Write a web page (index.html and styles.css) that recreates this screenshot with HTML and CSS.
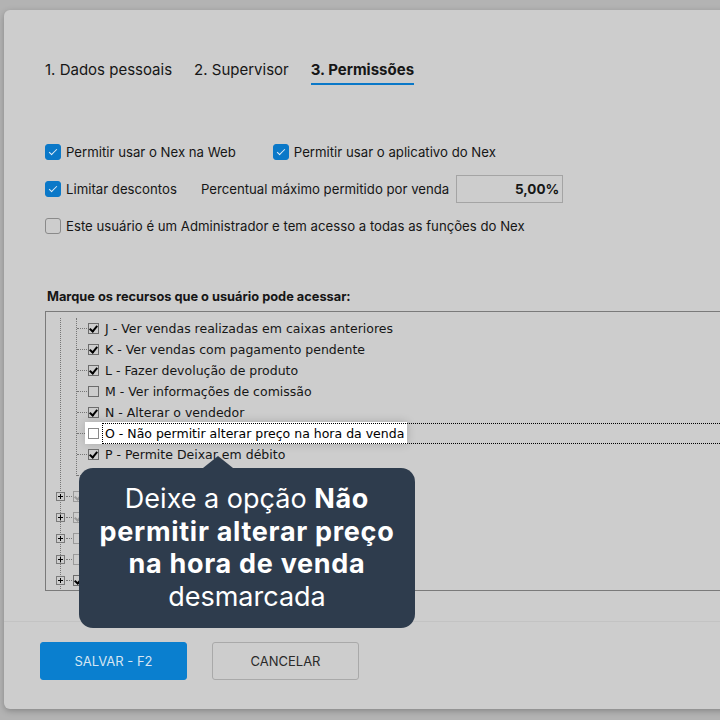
FILE: index.html
```html
<!DOCTYPE html>
<html lang="pt-BR">
<head>
  <meta charset="UTF-8" />
  <meta name="viewport" content="width=device-width, initial-scale=1.0" />
  <title>Permissões do usuário</title>
  <link rel="stylesheet" href="styles.css">
</head>
<body>
  <div class="dialog">
    <nav class="tabs">
      <span class="tab">1. Dados pessoais</span>
      <span class="tab">2. Supervisor</span>
      <span class="tab active">3. Permissões</span>
    </nav>

    <div class="options">
      <div class="opt-row">
        <label class="check"><span class="box on"></span>Permitir usar o Nex na Web</label>
        <label class="check app"><span class="box on"></span>Permitir usar o aplicativo do Nex</label>
      </div>
      <div class="opt-row">
        <label class="check"><span class="box on"></span>Limitar descontos</label>
        <span class="pct-label">Percentual máximo permitido por venda</span>
        <span class="pct-input">5,00%</span>
      </div>
      <div class="opt-row">
        <label class="check"><span class="box"></span>Este usuário é um Administrador e tem acesso a todas as funções do Nex</label>
      </div>
    </div>

    <div class="res-title">Marque os recursos que o usuário pode acessar:</div>
    <div class="tree">
      <div class="branch outer">
        <div class="branch inner">
          <div class="leaf"><span class="hl"></span><span class="cb on"></span><span class="txt">J - Ver vendas realizadas em caixas anteriores</span></div>
          <div class="leaf"><span class="hl"></span><span class="cb on"></span><span class="txt">K - Ver vendas com pagamento pendente</span></div>
          <div class="leaf"><span class="hl"></span><span class="cb on"></span><span class="txt">L - Fazer devolução de produto</span></div>
          <div class="leaf"><span class="hl"></span><span class="cb"></span><span class="txt">M - Ver informações de comissão</span></div>
          <div class="leaf"><span class="hl"></span><span class="cb on"></span><span class="txt">N - Alterar o vendedor</span></div>
          <div class="leaf spot"><span class="hl"></span><span class="cb"></span><span class="txt focus">O - Não permitir alterar preço na hora da venda</span></div>
          <div class="leaf"><span class="hl"></span><span class="cb on"></span><span class="txt">P - Permite Deixar em débito</span></div>
          <div class="leaf"><span class="hl"></span><span class="cb on"></span><span class="txt"></span></div>
        </div>
        <div class="node"><span class="plus"></span><span class="hl short"></span><span class="cb on off"></span></div>
        <div class="node"><span class="plus"></span><span class="hl short"></span><span class="cb on off"></span></div>
        <div class="node"><span class="plus"></span><span class="hl short"></span><span class="cb off"></span></div>
        <div class="node"><span class="plus"></span><span class="hl short"></span><span class="cb off"></span></div>
        <div class="node"><span class="plus"></span><span class="hl short"></span><span class="cb on"></span></div>
      </div>
    </div>

    <div class="footer">
      <button class="btn primary">SALVAR - F2</button>
      <button class="btn">CANCELAR</button>
    </div>

    <div class="tip">
      Deixe a opção <b>Não permitir alterar preço na hora de venda</b> desmarcada
    </div>
  </div>
</body>
</html>
```

FILE: styles.css
```css
body {
  margin: 0;
  height: 720px;
  overflow: hidden;
  background: #b3b3b3;
  font-family: Inter, "Noto Sans", sans-serif;
  color: #161616;
}
.dialog {
  position: relative;
  box-sizing: border-box;
  width: 760px;
  height: 699px;
  margin: 10px 0 0 4px;
  background: #cdcdcd;
  border-radius: 6px 0 0 6px;
  box-shadow: 0 2px 6px rgba(0, 0, 0, 0.25);
}

/* tabs */
.tabs {
  display: flex;
  gap: 22px;
  padding: 50px 0 0 41px;
}
.tab {
  font-size: 15px;
  line-height: 20px;
  padding-bottom: 3px;
  border-bottom: 2px solid transparent;
}
.tab.active {
  font-weight: 700;
  border-bottom-color: #0a78c8;
}

/* options */
.options {
  display: flex;
  flex-direction: column;
  gap: 9px;
  margin: 53px 0 0 41px;
}
.opt-row {
  display: flex;
  align-items: center;
  height: 28px;
  font-size: 13.2px;
}
.check {
  display: flex;
  align-items: center;
  gap: 5px;
}
.check.app {
  margin-left: 37px;
}
.box {
  position: relative;
  box-sizing: border-box;
  width: 16px;
  height: 16px;
  border: 1px solid #8a8a8a;
  border-radius: 3px;
}
.box.on {
  background: #0a78c8;
  border-color: #0a78c8;
}
.box.on::after {
  content: "";
  position: absolute;
  left: 5px;
  top: 2px;
  width: 3px;
  height: 7px;
  border: solid #e4eef7;
  border-width: 0 1.5px 1.5px 0;
  transform: rotate(45deg);
}
.pct-label {
  margin-left: 24px;
}
.pct-input {
  box-sizing: border-box;
  width: 107px;
  height: 28px;
  margin-left: 7px;
  padding: 0 3px;
  border: 1px solid #a4a4a4;
  font-size: 13.5px;
  font-weight: 700;
  text-align: right;
  line-height: 26px;
}

/* resources tree */
.res-title {
  margin: 49px 0 6px 43px;
  font-size: 12.8px;
  line-height: 16px;
  font-weight: 700;
}
.tree {
  box-sizing: border-box;
  height: 280px;
  margin-left: 41px;
  padding-top: 6px;
  border: 1px solid #7a7a7a;
  border-right: none;
  overflow: hidden;
  font-family: "DejaVu Sans", sans-serif;
  font-size: 12.5px;
}
.branch {
  display: flex;
  flex-direction: column;
  margin-left: 14px;
  border-left: 1px dotted #777;
}
.inner {
  margin-left: 15px;
  margin-bottom: 10px;
}
.inner .leaf:last-child {
  margin-bottom: -10px;
}
.leaf,
.node {
  position: relative;
  display: flex;
  align-items: center;
  height: 21px;
}
.hl {
  width: 10px;
  border-top: 1px dotted #777;
}
.hl.short {
  width: 6px;
  margin-left: 1px;
}
.cb {
  position: relative;
  box-sizing: border-box;
  flex: none;
  width: 11px;
  height: 11px;
  margin-left: 1px;
  border: 1px solid #6c6c6c;
}
.cb.on::after {
  content: "";
  position: absolute;
  left: 2px;
  top: 0;
  width: 3px;
  height: 6px;
  border: solid #000;
  border-width: 0 2px 2px 0;
  transform: rotate(40deg);
}
.cb.off {
  border-color: #9a9a9a;
}
.cb.off::after {
  border-color: #9a9a9a;
}
.txt {
  box-sizing: border-box;
  height: 21px;
  margin-left: 3px;
  padding: 0 2px 0 2px;
  border: 1px solid transparent;
  line-height: 19px;
  white-space: nowrap;
}
.plus {
  position: relative;
  box-sizing: border-box;
  flex: none;
  width: 9px;
  height: 9px;
  margin-left: -5px;
  border: 1px solid #7a7a7a;
}
.plus::before,
.plus::after {
  content: "";
  position: absolute;
  background: #000;
}
.plus::before {
  left: 1px;
  top: 3px;
  width: 5px;
  height: 1px;
}
.plus::after {
  left: 3px;
  top: 1px;
  width: 1px;
  height: 5px;
}

/* highlighted row */
.spot::before {
  content: "";
  position: absolute;
  left: 8px;
  top: -1px;
  width: 322px;
  height: 22px;
  background: #fff;
  box-shadow: 0 0 10px rgba(0, 0, 0, 0.18);
}
.spot .cb {
  border-color: #8a8a8a;
  background: #fff;
}
.spot .cb,
.spot .txt {
  z-index: 1;
}
.txt.focus {
  flex: 1;
  border: 1px dotted #000;
  color: #000;
}

/* footer */
.footer {
  display: flex;
  gap: 25px;
  margin-top: 30px;
  padding: 20px 0 0 36px;
  border-top: 1px solid #c3c3c3;
}
.btn {
  width: 147px;
  height: 38px;
  font-family: Inter, sans-serif;
  font-size: 13px;
  color: #2a2a2a;
  background: #cdcdcd;
  border: 1px solid #a9a9a9;
  border-radius: 3px;
}
.btn.primary {
  background: #0a7fcf;
  border-color: #0a7fcf;
  color: #d6e6f3;
}

/* tooltip */
.tip {
  position: absolute;
  left: 75px;
  top: 458px;
  box-sizing: border-box;
  width: 336px;
  height: 160px;
  padding: 15px 10px 0;
  background: #2e3c4d;
  border-radius: 14px;
  color: #fff;
  font-size: 27px;
  line-height: 32.5px;
  text-align: center;
}
.tip b {
  font-weight: 700;
  letter-spacing: 0.7px;
}
.tip::before {
  content: "";
  position: absolute;
  left: 124px;
  top: -12px;
  border-left: 15px solid transparent;
  border-right: 15px solid transparent;
  border-bottom: 12px solid #2e3c4d;
}
```
